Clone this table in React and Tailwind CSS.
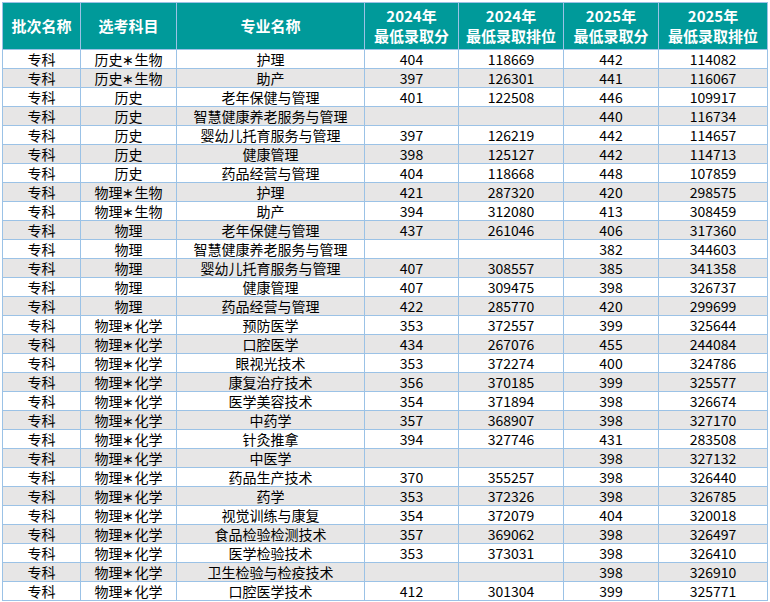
import React from 'react';

const rows = [
  ['专科', '历史∗生物', '护理', '404', '118669', '442', '114082'],
  ['专科', '历史∗生物', '助产', '397', '126301', '441', '116067'],
  ['专科', '历史', '老年保健与管理', '401', '122508', '446', '109917'],
  ['专科', '历史', '智慧健康养老服务与管理', '', '', '440', '116734'],
  ['专科', '历史', '婴幼儿托育服务与管理', '397', '126219', '442', '114657'],
  ['专科', '历史', '健康管理', '398', '125127', '442', '114713'],
  ['专科', '历史', '药品经营与管理', '404', '118668', '448', '107859'],
  ['专科', '物理∗生物', '护理', '421', '287320', '420', '298575'],
  ['专科', '物理∗生物', '助产', '394', '312080', '413', '308459'],
  ['专科', '物理', '老年保健与管理', '437', '261046', '406', '317360'],
  ['专科', '物理', '智慧健康养老服务与管理', '', '', '382', '344603'],
  ['专科', '物理', '婴幼儿托育服务与管理', '407', '308557', '385', '341358'],
  ['专科', '物理', '健康管理', '407', '309475', '398', '326737'],
  ['专科', '物理', '药品经营与管理', '422', '285770', '420', '299699'],
  ['专科', '物理∗化学', '预防医学', '353', '372557', '399', '325644'],
  ['专科', '物理∗化学', '口腔医学', '434', '267076', '455', '244084'],
  ['专科', '物理∗化学', '眼视光技术', '353', '372274', '400', '324786'],
  ['专科', '物理∗化学', '康复治疗技术', '356', '370185', '399', '325577'],
  ['专科', '物理∗化学', '医学美容技术', '354', '371894', '398', '326674'],
  ['专科', '物理∗化学', '中药学', '357', '368907', '398', '327170'],
  ['专科', '物理∗化学', '针灸推拿', '394', '327746', '431', '283508'],
  ['专科', '物理∗化学', '中医学', '', '', '398', '327132'],
  ['专科', '物理∗化学', '药品生产技术', '370', '355257', '398', '326440'],
  ['专科', '物理∗化学', '药学', '353', '372326', '398', '326785'],
  ['专科', '物理∗化学', '视觉训练与康复', '354', '372079', '404', '320018'],
  ['专科', '物理∗化学', '食品检验检测技术', '357', '369062', '398', '326497'],
  ['专科', '物理∗化学', '医学检验技术', '353', '373031', '398', '326410'],
  ['专科', '物理∗化学', '卫生检验与检疫技术', '', '', '398', '326910'],
  ['专科', '物理∗化学', '口腔医学技术', '412', '301304', '399', '325771'],
];

const headers = [
  ['批次名称'],
  ['选考科目'],
  ['专业名称'],
  ['2024年', '最低录取分'],
  ['2024年', '最低录取排位'],
  ['2025年', '最低录取分'],
  ['2025年', '最低录取排位'],
];

const widths = ['w-[78px]', 'w-[96px]', 'w-[188px]', 'w-[94px]', 'w-[105px]', 'w-[95px]', 'w-[109px]'];

export default function App() {
  return (
    <div className="bg-white w-[770px] h-[602px] pt-[2px] pl-[2px] font-['Noto_Sans_CJK_SC',sans-serif]">
      <table className="table-fixed border-collapse w-[766px]">
        <colgroup>
          {widths.map((w, i) => (
            <col key={i} className={w} />
          ))}
        </colgroup>
        <thead>
          <tr className="h-[47px] bg-[#009a9a]">
            {headers.map((h, i) => (
              <th
                key={i}
                className="border border-[#9bc2e6] p-0 text-center align-middle text-white font-bold text-[15px] leading-[20px]"
              >
                {h.map((line, j) => (
                  <div key={j}>{line}</div>
                ))}
              </th>
            ))}
          </tr>
        </thead>
        <tbody>
          {rows.map((r, i) => (
            <tr key={i} className={`h-[19px] ${i % 2 === 1 ? 'bg-[#e7e6e6]' : 'bg-white'}`}>
              {r.map((c, j) => (
                <td
                  key={j}
                  className="border border-[#9bc2e6] p-0 text-center align-middle text-black text-[14px] leading-[17px] whitespace-nowrap"
                >
                  {c}
                </td>
              ))}
            </tr>
          ))}
        </tbody>
      </table>
    </div>
  );
}
